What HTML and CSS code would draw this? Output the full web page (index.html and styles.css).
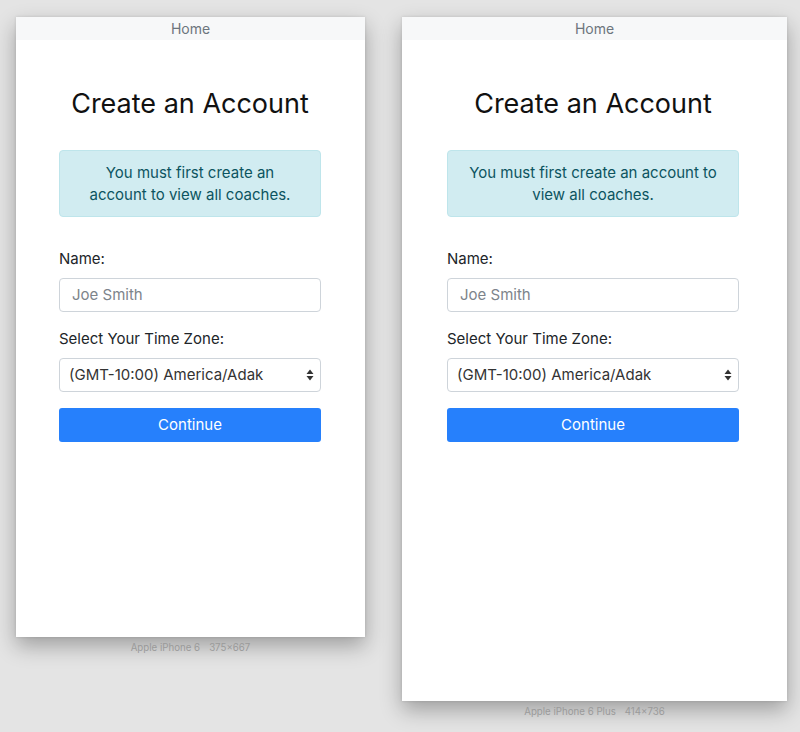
FILE: index.html
```html
<!DOCTYPE html>
<html lang="en">
<head>
<meta charset="utf-8">
<title>Create an Account</title>
<link rel="stylesheet" href="styles.css">
</head>
<body>
<div class="canvas">
  <div class="device device-small">
    <div class="screen">
      <div class="navbar">Home</div>
      <div class="content">
        <h1 class="title">Create an Account</h1>
        <div class="alert">You must first create an account to view all coaches.</div>
        <label class="label">Name:</label>
        <div class="input placeholder">Joe Smith</div>
        <label class="label">Select Your Time Zone:</label>
        <div class="input select">
          <span>(GMT-10:00) America/Adak</span>
          <svg class="arrows" width="8" height="12" viewBox="0 0 8 12"><path d="M4 0.5 L7.5 5 L0.5 5 Z M4 11.5 L7.5 7 L0.5 7 Z" fill="#333"/></svg>
        </div>
        <div class="button">Continue</div>
      </div>
    </div>
    <div class="caption">Apple iPhone 6<span class="dim">375×667</span></div>
  </div>
  <div class="device device-large">
    <div class="screen">
      <div class="navbar">Home</div>
      <div class="content">
        <h1 class="title">Create an Account</h1>
        <div class="alert">You must first create an account to view all coaches.</div>
        <label class="label">Name:</label>
        <div class="input placeholder">Joe Smith</div>
        <label class="label">Select Your Time Zone:</label>
        <div class="input select">
          <span>(GMT-10:00) America/Adak</span>
          <svg class="arrows" width="8" height="12" viewBox="0 0 8 12"><path d="M4 0.5 L7.5 5 L0.5 5 Z M4 11.5 L7.5 7 L0.5 7 Z" fill="#333"/></svg>
        </div>
        <div class="button">Continue</div>
      </div>
    </div>
    <div class="caption">Apple iPhone 6 Plus<span class="dim">414×736</span></div>
  </div>
</div>
</body>
</html>
```
FILE: styles.css
```css
* { box-sizing: border-box; }
html, body {
  margin: 0;
  padding: 0;
  background: #e4e4e4;
  height: 100%;
  overflow: hidden;
}
body {
  font-family: Inter, "Liberation Sans", sans-serif;
  color: #212529;
}
.canvas {
  display: flex;
  align-items: flex-start;
  gap: 37px;
  padding: 17px 0 0 16px;
}
.device {
  display: flex;
  flex-direction: column;
  align-items: center;
}
.screen {
  background: #fff;
  box-shadow: 0 9px 20px rgba(0,0,0,0.3), 0 0 3px rgba(0,0,0,0.12);
  display: flex;
  flex-direction: column;
}
.device-small .screen { width: 349px; height: 620px; }
.device-large .screen { width: 385px; height: 684px; }
.navbar {
  height: 23px;
  background: #f7f8f9;
  color: #6c757d;
  font-size: 14px;
  line-height: 23px;
  text-align: center;
}
.content {
  display: flex;
  flex-direction: column;
  padding-top: 47px;
}
.device-small .content { padding-left: 43px; padding-right: 44px; }
.device-large .content { padding-left: 45px; padding-right: 48px; }
.title {
  margin: 0;
  font-size: 27px;
  font-weight: 400;
  line-height: 34px;
  text-align: center;
  color: #111;
}
.alert {
  margin-top: 29px;
  background: #d1ecf1;
  border: 1px solid #bee5eb;
  border-radius: 4px;
  color: #0c5460;
  font-size: 15px;
  line-height: 22px;
  padding: 10.5px 18px;
  text-align: center;
}
.label {
  margin-top: 31px;
  font-size: 15px;
  line-height: 22px;
  color: #212529;
}
.select + .button { margin-top: 16px; }
.input + .label { margin-top: 16px; }
.input {
  margin-top: 8px;
  height: 34px;
  border: 1px solid #ced4da;
  border-radius: 4px;
  font-size: 15px;
  line-height: 32px;
  padding: 0 12px;
  color: #495057;
}
.placeholder { color: #7d848b; }
.select {
  display: flex;
  align-items: center;
  justify-content: space-between;
  padding: 0 6px 0 9px;
  color: #333;
}
.arrows { flex: none; }
.button {
  height: 34px;
  background: #2680fc;
  border-radius: 3px;
  color: #fff;
  font-size: 15px;
  line-height: 34px;
  text-align: center;
}
.caption {
  margin-top: 5px;
  font-size: 9.7px;
  line-height: 12px;
  color: #9a9a9a;
}
.dim { margin-left: 9px; }
```
